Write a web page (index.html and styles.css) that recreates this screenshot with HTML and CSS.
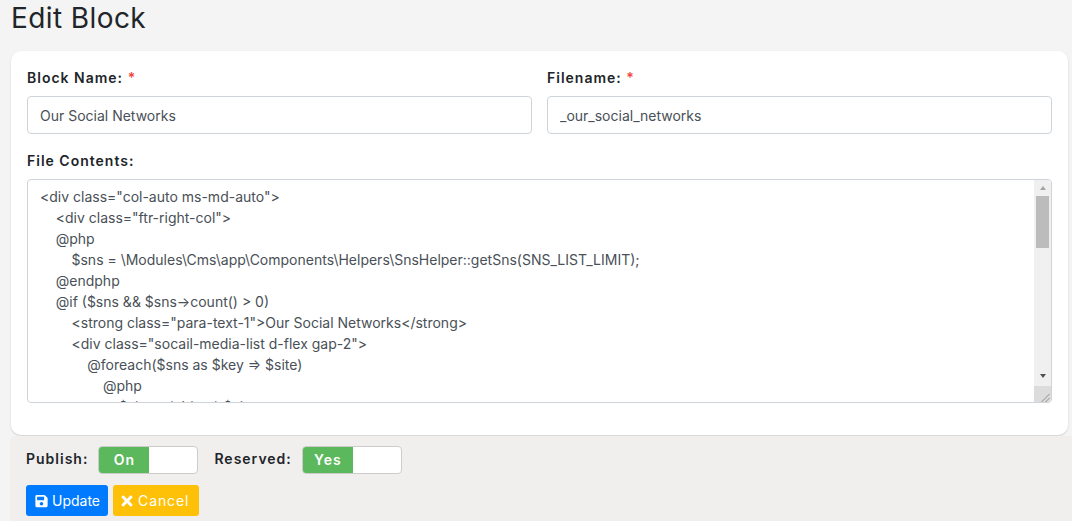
FILE: index.html
```html
<!DOCTYPE html>
<html lang="en">
<head>
<meta charset="utf-8">
<title>Edit Block</title>
<link rel="stylesheet" href="styles.css">
</head>
<body>
<h1 class="title">Edit Block</h1>
<form class="form">
  <section class="card">
    <div class="row">
      <div class="field">
        <label class="label">Block Name: <span class="req">*</span></label>
        <input class="input" type="text" value="Our Social Networks">
      </div>
      <div class="field">
        <label class="label">Filename: <span class="req">*</span></label>
        <input class="input" type="text" value="_our_social_networks">
      </div>
    </div>
    <div class="field">
      <label class="label">File Contents:</label>
      <div class="code-wrap">
      <textarea class="code" spellcheck="false"><div class="col-auto ms-md-auto">
    <div class="ftr-right-col">
    @php
        $sns = \Modules\Cms\app\Components\Helpers\SnsHelper::getSns(SNS_LIST_LIMIT);
    @endphp
    @if ($sns && $sns->count() > 0)
        <strong class="para-text-1">Our Social Networks</strong>
        <div class="socail-media-list d-flex gap-2">
            @foreach($sns as $key => $site)
                @php
                    $site = (object) $site;
                @endphp
            @endforeach
        </div>
    @endif
    </div>
</div></textarea>
      <div class="sb" aria-hidden="true">
        <div class="sb-btn sb-up"><span class="arrow-up"></span></div>
        <div class="sb-track"><div class="sb-thumb"></div></div>
        <div class="sb-btn sb-down"><span class="arrow-down"></span></div>
        <div class="sb-corner">
          <svg class="grip" viewBox="0 0 17 16"><path d="M8 15.500L16 7.500M12 15.500L16 11.500"/></svg>
        </div>
      </div>
      </div>
    </div>
  </section>
  <footer class="actions">
    <div class="toggles">
      <span class="toggle-label">Publish:</span>
      <span class="toggle"><span class="toggle-on">On</span></span>
      <span class="toggle-label">Reserved:</span>
      <span class="toggle"><span class="toggle-on">Yes</span></span>
    </div>
    <div class="buttons">
      <button class="btn btn-blue" type="button">
        <svg class="icon" viewBox="0 0 448 512" aria-hidden="true"><path fill="currentColor" d="M433.900 129.900l-83.900-83.900A48 48 0 0 0 316.100 32H48C21.500 32 0 53.500 0 80v352c0 26.500 21.500 48 48 48h352c26.500 0 48-21.500 48-48V163.900a48 48 0 0 0-14.100-34zM224 416c-35.300 0-64-28.700-64-64s28.700-64 64-64 64 28.700 64 64-28.700 64-64 64zm96-304.500V212c0 6.600-5.400 12-12 12H76c-6.600 0-12-5.400-12-12V108c0-6.600 5.400-12 12-12h228.500c3.200 0 6.200 1.300 8.500 3.500l3.500 3.500c2.300 2.300 3.500 5.300 3.500 8.500z"/></svg>Update
      </button>
      <button class="btn btn-yellow" type="button">
        <svg class="icon icon-x" viewBox="0 0 352 512" aria-hidden="true"><path fill="currentColor" d="M242.700 256l100.100-100.100c12.300-12.300 12.300-32.200 0-44.500l-22.200-22.200c-12.300-12.300-32.200-12.300-44.500 0L176 189.300 75.900 89.200c-12.300-12.300-32.200-12.300-44.500 0L9.200 111.400c-12.300 12.300-12.300 32.200 0 44.500L109.300 256 9.200 356.100c-12.300 12.300-12.300 32.200 0 44.500l22.200 22.200c12.300 12.300 32.200 12.300 44.500 0L176 322.700l100.100 100.100c12.300 12.300 32.200 12.300 44.500 0l22.200-22.200c12.300-12.300 12.300-32.200 0-44.500L242.700 256z"/></svg>Cancel
      </button>
    </div>
  </footer>
</form>
</body>
</html>
```
FILE: styles.css
```css
* { box-sizing: border-box; }
html, body { height: 100%; }
body {
  margin: 0;
  overflow: hidden;
  background: #f4f4f4;
  color: #212529;
  font-family: Inter, "Liberation Sans", sans-serif;
  font-size: 14px;
}
.title {
  margin: 0;
  padding: 1px 0 0 11px;
  height: 51px;
  font-size: 28px;
  line-height: 34px;
  font-weight: 400;
  letter-spacing: 0.4px;
}
.form { margin-left: 11px; margin-right: 4px; }
.card {
  height: 384px;
  padding: 16px 16px 0;
  background: #fff;
  border-radius: 10px;
  box-shadow: 0 1px 2px rgba(0, 0, 0, 0.15);
}
.row {
  display: grid;
  grid-template-columns: 505px 505px;
  column-gap: 15px;
  margin-bottom: 16px;
}
.field { display: flex; flex-direction: column; }
.label {
  height: 21px;
  margin-bottom: 8px;
  font-weight: 600;
  line-height: 21px;
  letter-spacing: 1px;
}
.req { color: #f4433c; }
.input {
  height: 38px;
  padding: 0 12px;
  border: 1px solid #ced4da;
  border-radius: 4px;
  color: #495057;
  background: #fff;
  font: 14px Inter, "Liberation Sans", sans-serif;
}
.code-wrap { position: relative; width: 1025px; height: 224px; }
.code {
  display: block;
  width: 100%;
  height: 100%;
  padding: 6px 30px 6px 12px;
  border: 1px solid #ced4da;
  border-radius: 4px;
  color: #495057;
  background: #fff;
  font: 14px/21px Inter, "Liberation Sans", sans-serif;
  white-space: pre;
  overflow: hidden;
  resize: none;
}
.sb {
  position: absolute;
  top: 1px;
  right: 1px;
  bottom: 1px;
  display: flex;
  flex-direction: column;
  width: 17px;
  background: #f0f0f0;
  border-radius: 0 3px 3px 0;
  overflow: hidden;
}
.sb-btn { display: flex; align-items: center; justify-content: center; flex: none; }
.sb-up { height: 16px; }
.sb-down { height: 20px; }
.arrow-up, .arrow-down { width: 0; height: 0; border-left: 3.5px solid transparent; border-right: 3.5px solid transparent; }
.arrow-up { border-bottom: 4px solid #a3a3a3; }
.arrow-down { border-top: 4px solid #505050; }
.sb-track { flex: 1; padding: 0 2px; }
.sb-thumb { height: 52px; background: #bcbcbc; }
.sb-corner { height: 16px; flex: none; background: #dcdcdc; }
.grip { display: block; width: 17px; height: 16px; }
.grip path { fill: none; stroke: #404040; stroke-width: 1; stroke-dasharray: 1.4 1.4; }
.actions {
  height: 85px;
  margin-top: 1px;
  margin-left: -1px;
  margin-right: -4px;
  padding: 10px 16px 0;
  background: #f1efee;
  border-radius: 6px 0 0 0;
}
.toggles { display: flex; align-items: center; height: 28px; }
.toggle-label {
  margin-right: 10px;
  margin-top: -4px;
  font-weight: 600;
  letter-spacing: 1px;
}
.toggle {
  display: block;
  width: 100px;
  height: 28px;
  margin-right: 16px;
  border: 1px solid #ccc;
  border-radius: 4px;
  background: #fff;
  overflow: hidden;
}
.toggle-on {
  display: block;
  width: 50px;
  height: 100%;
  background: #5cb85c;
  color: #fff;
  font-weight: 600;
  line-height: 26px;
  text-align: center;
  letter-spacing: 1px;
}
.buttons { display: flex; gap: 5px; margin-top: 11px; }
.btn {
  display: flex;
  align-items: center;
  height: 31px;
  padding: 0 9px;
  border: 0;
  border-radius: 3px;
  color: #fff;
  font: 14px Inter, "Liberation Sans", sans-serif;
}
.btn-blue { width: 82px; background: #007bff; }
.btn-yellow { width: 86px; padding-left: 8px; background: #ffc107; letter-spacing: 0.9px; }
.icon { width: 13px; height: 14px; margin-right: 4px; flex: none; }
.icon-x { width: 12px; height: 16px; margin-right: 5px; }
```
